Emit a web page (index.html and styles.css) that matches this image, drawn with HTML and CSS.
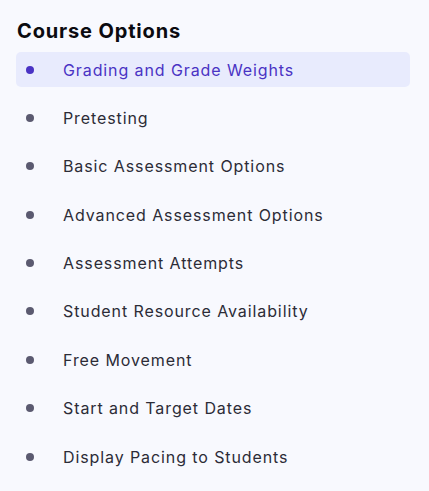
FILE: index.html
```html
<!DOCTYPE html>
<html lang="en">
<head>
    <meta charset="UTF-8">
    <meta name="viewport" content="width=device-width, initial-scale=1.0">
    <title>Course Options</title>
    <link rel="stylesheet" href="styles.css">
</head>
<body>
    <nav class="options">
        <h2 class="options-title">Course Options</h2>
        <ul class="options-list">
            <li class="option active"><span class="dot"></span>Grading and Grade Weights</li>
            <li class="option"><span class="dot"></span>Pretesting</li>
            <li class="option"><span class="dot"></span>Basic Assessment Options</li>
            <li class="option"><span class="dot"></span>Advanced Assessment Options</li>
            <li class="option"><span class="dot"></span>Assessment Attempts</li>
            <li class="option"><span class="dot"></span>Student Resource Availability</li>
            <li class="option"><span class="dot"></span>Free Movement</li>
            <li class="option"><span class="dot"></span>Start and Target Dates</li>
            <li class="option"><span class="dot"></span>Display Pacing to Students</li>
        </ul>
    </nav>
</body>
</html>
```
FILE: styles.css
```css
* {
    margin: 0;
    padding: 0;
    box-sizing: border-box;
    font-family: Inter, 'Noto Sans', sans-serif;
}

body {
    background: #f8f9fe;
    min-height: 100vh;
}

.options {
    width: 410px;
    padding: 17px 0 0 16px;
}

.options-title {
    font-size: 20px;
    line-height: 28px;
    font-weight: 700;
    color: #0b0b10;
    padding-left: 1px;
    margin-bottom: 7px;
    letter-spacing: 0.85px;
}

.options-list {
    list-style: none;
    display: flex;
    flex-direction: column;
    gap: 13.4px;
}

.option {
    display: flex;
    align-items: center;
    height: 35px;
    padding-left: 10px;
    border-radius: 5px;
    font-size: 16px;
    color: #2c2c37;
    letter-spacing: 0.9px;
}

.dot {
    width: 8px;
    height: 8px;
    border-radius: 50%;
    background: #5b5a70;
    margin-right: 29px;
}

.option.active {
    background: #e8ebfd;
    color: #4a33c4;
}

.option.active .dot {
    background: #4a33c4;
}
```
